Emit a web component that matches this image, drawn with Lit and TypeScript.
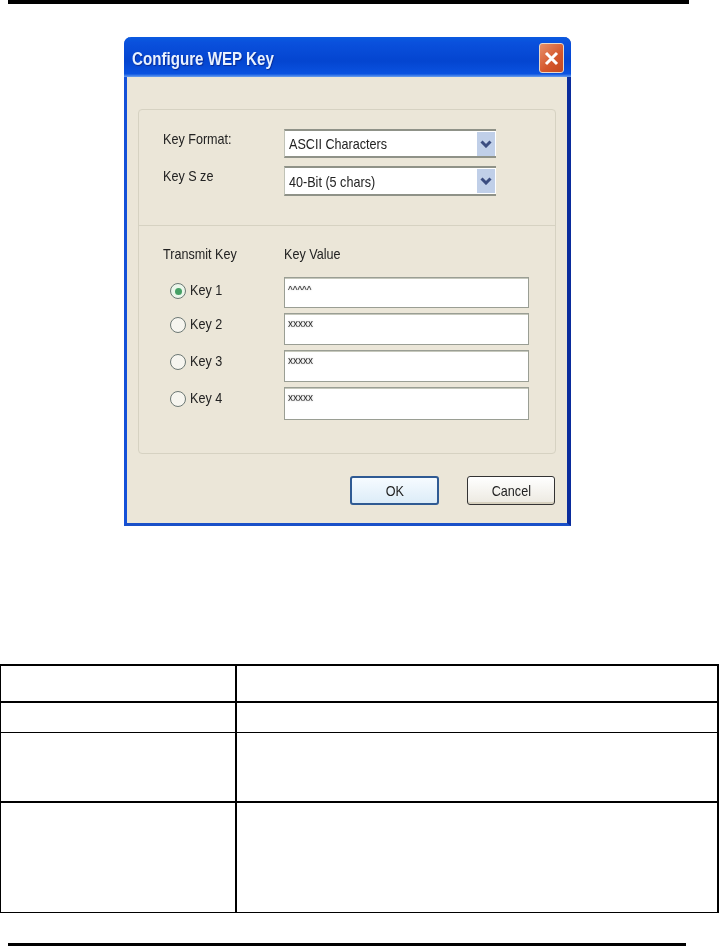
import { LitElement, html, css, svg } from "lit";
import { customElement } from "lit/decorators.js";

@customElement("app-root")
export class AppRoot extends LitElement {
  static styles = css`
    :host { display: block; width: 719px; height: 946px; position: relative; overflow: hidden; background: #fff; font-family: "Liberation Sans", Arial, sans-serif; }
    .page { display: flex; flex-direction: column; height: 946px; }
    .rule { height: 4px; margin: 0 30px 0 8px; background: #000; flex: none; }
    .rule.bot { margin: auto 33px 0 8px; height: 3px; }
    .shot { flex: none; margin: 33px 0 0 124px; width: 447px; height: 489px; box-sizing: border-box; background: #ebe6d8; border-style: solid; border-color: #0a46cc #0a2c9c #1a50c8 #1450d8; border-width: 0 4px 3px 3px; border-radius: 7px 7px 0 0; display: flex; flex-direction: column; filter: blur(0.4px); }
    .n { display: inline-block; transform: scaleX(0.84); transform-origin: left center; white-space: nowrap; }
    .title { height: 40px; margin: 0 -4px 0 -3px; flex: none; border-radius: 7px 7px 0 0; background: linear-gradient(#0a5ae0 0%, #0a50dc 15%, #0445d0 60%, #0a52e0 92%, #6aa0f0 100%); display: flex; align-items: center; justify-content: space-between; padding: 0 7px 0 8px; }
    .title span { font-weight: 700; font-size: 17.5px; margin-top: 5px; color: #e8f2ff; text-shadow: 1px 1px 1px #0a2a90; transform: scaleX(0.865); transform-origin: left; white-space: nowrap; }
    .close { width: 25px; height: 30px; box-sizing: border-box; border: 1px solid #e8d8c8; border-radius: 3px; background: linear-gradient(135deg, #e88f68, #d4562c 60%, #c44a20); display: flex; align-items: center; justify-content: center; margin-top: 2px; }
    .close svg { display: block; }
    .body { flex: 1; padding: 32px 11px 0 11px; display: flex; flex-direction: column; }
    .group { border: 1px solid #d6d2c2; border-radius: 4px; height: 345px; box-sizing: border-box; flex: none; }
    .top { height: 116px; border-bottom: 1px solid #d6d2c2; box-sizing: border-box; padding: 19px 0 0 24px; }
    .form { display: grid; grid-template-columns: 121px 212px; grid-template-rows: 29px 30px; row-gap: 8px; }
    .form label { font-size: 15px; color: #222; line-height: 19px; }
    .select { box-sizing: border-box; border: solid #8f9288; border-width: 2px 0; border-left: 1px solid #c0c2b6; background: #fff; font-size: 15px; color: #222; display: flex; align-items: center; justify-content: space-between; padding-left: 4px; }
    .select .n { width: 150px; }
    .arrow { width: 18px; height: 24px; background: #c0cfe8; display: flex; align-items: center; justify-content: center; margin-right: 1px; flex: none; }
    .low { padding: 20px 0 0 24px; }
    .heads { display: grid; grid-template-columns: 121px 1fr; font-size: 15px; color: #222; line-height: 16px; margin-bottom: 15px; }
    .rows { display: flex; flex-direction: column; gap: 5px; }
    .row { display: grid; grid-template-columns: 7px 114px 245px; }
    .k1 { height: 31px; } .k2, .k3 { height: 32px; } .k4 { height: 33px; }
    .opt { grid-column: 2; display: flex; align-items: center; gap: 4px; font-size: 15px; line-height: 16px; color: #222; height: 24px; }
    .opt .n { margin-top: -2px; }
    .k1 .opt { margin-top: 2px; }
    .radio { width: 16px; height: 16px; flex: none; box-sizing: border-box; border: 1.5px solid #6c7874; border-radius: 50%; background: #f6f5ef; display: flex; align-items: center; justify-content: center; }
    .radio.on { background: #eaf6ea; }
    .radio.on i { width: 7px; height: 7px; border-radius: 50%; background: #45a065; display: block; }
    .input { grid-column: 3; box-sizing: border-box; border: 1px solid #9a9e94; background: #fff; box-shadow: inset 0 1px 0 #c6c8bc; font-size: 10px; color: #333; padding: 4px 0 0 3px; line-height: 12px; text-shadow: 0 0 2px #bbb; }
    .k1 .input { padding-top: 7px; }
    .btns { display: flex; justify-content: flex-end; gap: 28px; padding: 22px 1px 0 0; }
    .btn { height: 29px; box-sizing: border-box; border-radius: 3px; font-size: 15px; color: #222; display: flex; align-items: center; justify-content: center; }
    .btn .n { transform-origin: center; }
    .ok { width: 89px; border: 2px solid #2f5a93; background: linear-gradient(#f6fbff, #dcecf8); }
    .cancel { width: 88px; border: 1px solid #333; background: linear-gradient(#fff, #ece9e0); box-shadow: inset 0 -2px 0 #d6d0be; }
    .grid { flex: none; margin-top: 138px; display: grid; grid-template-columns: 236px 1fr; width: 719px; height: 249px; box-sizing: border-box; border: solid #000; border-width: 2px 2px 1px 1px; }
    .cell { box-sizing: border-box; }
    .l { border-right: 2px solid #000; }
    .r1 { height: 37px; border-bottom: 2px solid #000; }
    .r2 { height: 30px; border-bottom: 1px solid #000; }
    .r3 { height: 70px; border-bottom: 2px solid #000; }
    .r4 { height: 109px; }
  `;
  render() {
    const keys = [["Key 1", "^^^^^", true], ["Key 2", "xxxxx", false], ["Key 3", "xxxxx", false], ["Key 4", "xxxxx", false]] as const;
    const chev = svg`<path d="M1.5 1.5 L6 6 L10.5 1.5" fill="none" stroke="#3b4d80" stroke-width="3"/>`;
    return html`<div class="page">
      <div class="rule"></div>
      <div class="shot">
        <div class="title"><span>Configure WEP Key</span>
          <div class="close"><svg width="17" height="17" viewBox="0 0 17 17"><path d="M3 3 L14 14 M14 3 L3 14" stroke="#fff" stroke-width="3"/></svg></div>
        </div>
        <div class="body">
          <div class="group">
            <div class="top"><div class="form">
              <label><span class="n">Key Format:</span></label><div class="select"><span class="n">ASCII Characters</span><div class="arrow"><svg width="12" height="8" viewBox="0 0 12 8">${chev}</svg></div></div>
              <label><span class="n">Key S ze</span></label><div class="select"><span class="n">40-Bit (5 chars)</span><div class="arrow"><svg width="12" height="8" viewBox="0 0 12 8">${chev}</svg></div></div>
            </div></div>
            <div class="low">
              <div class="heads"><span class="n">Transmit Key</span><span class="n">Key Value</span></div>
              <div class="rows">
                ${keys.map(([k, v, on], i) => html`<div class="row k${i + 1}"><div class="opt"><div class="radio ${on ? "on" : ""}">${on ? html`<i></i>` : ""}</div><span class="n">${k}</span></div><div class="input">${v}</div></div>`)}
              </div>
            </div>
          </div>
          <div class="btns"><div class="btn ok"><span class="n">OK</span></div><div class="btn cancel"><span class="n">Cancel</span></div></div>
        </div>
      </div>
      <div class="grid">
        <div class="cell l r1"></div><div class="cell r1"></div>
        <div class="cell l r2"></div><div class="cell r2"></div>
        <div class="cell l r3"></div><div class="cell r3"></div>
        <div class="cell l r4"></div><div class="cell r4"></div>
      </div>
      <div class="rule bot"></div>
    </div>`;
  }
}
